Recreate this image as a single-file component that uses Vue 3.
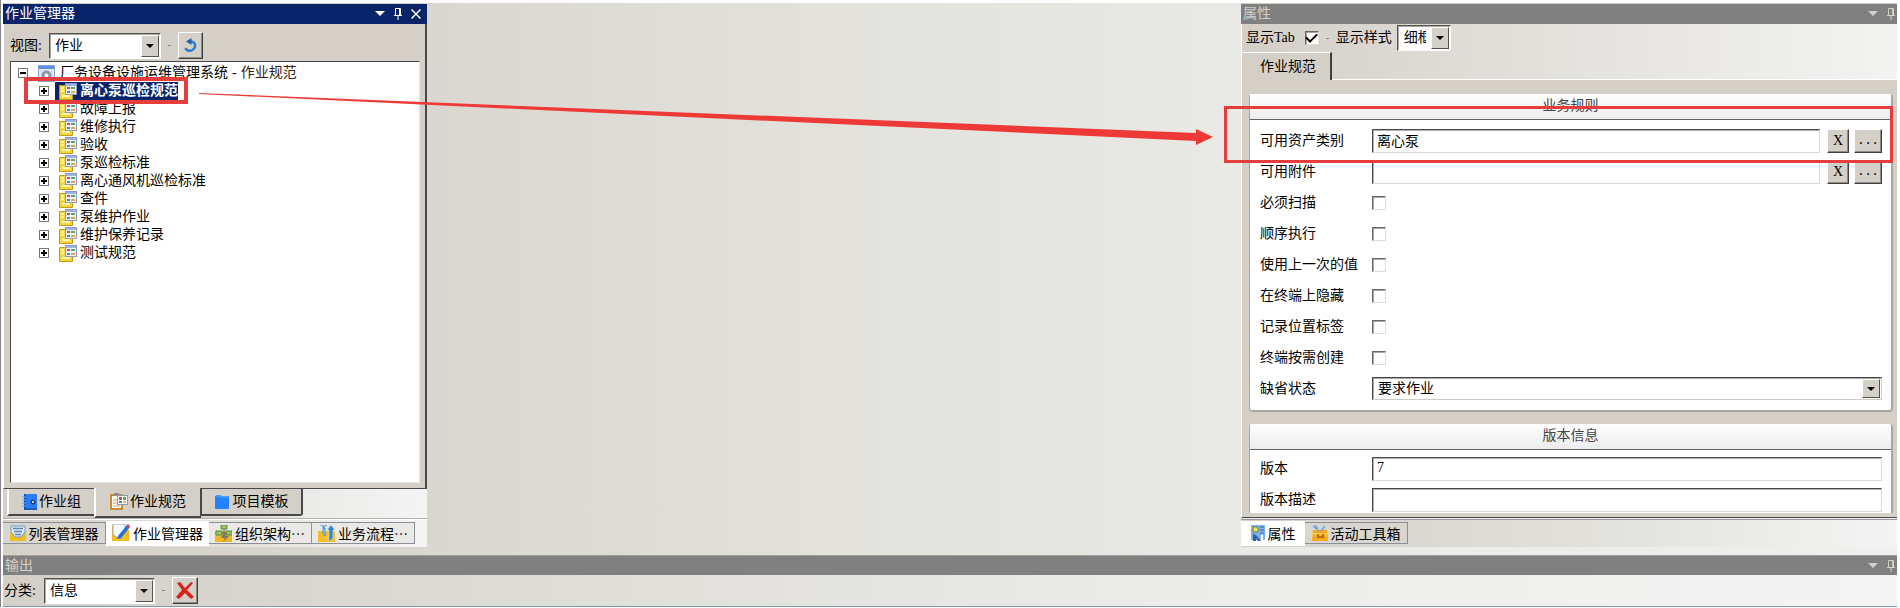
<script setup>
import { ref } from 'vue'

const view = ref('作业')
const category = ref('信息')
const style = ref('细框')
const state = ref('要求作业')
const showTab = ref(true)
const assetClass = ref('离心泵')
const attachment = ref('')
const version = ref('7')
const description = ref('')

const items = ref([
  '离心泵巡检规范', '故障上报', '维修执行', '验收', '泵巡检标准',
  '离心通风机巡检标准', '查件', '泵维护作业', '维护保养记录', '测试规范',
])
const flags = ref([
  { id: 'scan', label: '必须扫描', on: false },
  { id: 'order', label: '顺序执行', on: false },
  { id: 'last', label: '使用上一次的值', on: false },
  { id: 'hide', label: '在终端上隐藏', on: false },
  { id: 'place', label: '记录位置标签', on: false },
  { id: 'demand', label: '终端按需创建', on: false },
])
</script>

<template>
  <div class="page">
    <div class="workspace">
      <section class="panel left">
        <header class="title active">
          <h2>作业管理器</h2>
          <button class="tool" aria-label="菜单"><svg width="10" height="6"><path d="M0 0h10L5 5z" fill="currentColor" /></svg></button>
          <button class="tool" aria-label="固定"><svg width="8" height="12" fill="none" stroke="currentColor"><path d="M1.500 7V.5h5V7M5.500 1v6M0 7.500h8M4 8v4" /></svg></button>
          <button class="tool" aria-label="关闭"><svg width="10" height="10" stroke="currentColor" stroke-width="1.500"><path d="M.5.5l9 9M9.500.5l-9 9" /></svg></button>
        </header>
        <div class="body left-body">
          <div class="toolbar">
            <label for="view">视图:</label>
            <span class="combo view"><select id="view" v-model="view"><option>作业</option></select><i></i></span>
            <span class="dash"></span>
            <button class="raised refresh" aria-label="刷新">
              <svg width="15" height="15"><path d="M7 3.500c4 0 5.500 2 5 5s-4 5-7 4l-3-2" fill="none" stroke="#2b7fd0" stroke-width="2.500" /><path d="M3 3.500L8.500 0v7z" fill="#1f63a8" /></svg>
            </button>
          </div>
          <div class="tree">
            <div class="node root">
              <button class="expander" aria-label="折叠"></button>
              <svg width="17" height="17"><rect x=".5" y=".5" width="16" height="16" fill="#dfe5ee" stroke="#8aa6d6" /><path d="M1 1h15v3H1z" fill="#5d90e4" /><circle cx="8.500" cy="10.500" r="3.500" fill="#fff" stroke="#8b97a6" stroke-width="3" /></svg>
              <span class="name">厂务设备设施运维管理系统<span class="sep">-</span><span class="kind">作业规范</span></span>
            </div>
            <div v-for="(item, i) in items" :key="item" class="node" :class="{ selected: i === 0 }">
              <button class="expander plus" aria-label="展开"></button>
              <span class="entry">
                <svg width="18" height="17"><path d="M.5 2.500h6v3h7v11H.5z" fill="#f6d63c" stroke="#c49a1c" /><path d="M2 5h3M2 8h3M3 13h8" stroke="#fff6b0" stroke-width="2" /><rect x="6.500" y=".5" width="11" height="11" fill="#eef4ff" stroke="#8a9cc4" /><path d="M7 1h10v2H7z" fill="#9fb4e4" /><path d="M8 4h3v2H8z" fill="#c8514b" /><path d="M12 4h4v2h-4z" fill="#56a957" /><path d="M8 8h3v2H8z" fill="#4a86d8" /><path d="M12 8h4v2h-4z" fill="#e0a646" /></svg>
                <span class="name">{{ item }}</span>
              </span>
              <span v-if="i === 0" class="mark"></span>
            </div>
          </div>
        </div>
        <nav class="sheets">
          <button class="sheet">
            <svg width="15" height="16"><path d="M2 0h13v16H2z" fill="#2b7cf0" /><path d="M2 0h2v16H2z" fill="#1456b8" /><path d="M0 3h4M0 6h4M0 9h4M0 12h4" stroke="#6aa5f5" /><path d="M4 14h11v2H4z" fill="#1a5dc4" /><circle cx="11" cy="8" r="2.500" fill="#123f8c" /><circle cx="11" cy="8" r="1" fill="#fff" /></svg>作业组
          </button>
          <button class="sheet current">
            <svg width="18" height="17"><rect x="1" y="2" width="11" height="14" fill="#fffaf0" stroke="#c98a3c" stroke-width="2" /><path d="M4 0h5v3H4z" fill="#8c8c8c" /><path d="M3 7h7M3 10h7M3 13h7" stroke="#c7a47a" /><rect x="7.500" y="2.500" width="10" height="9" fill="#fff" stroke="#8a9cb4" /><path d="M9 4h3v3H9z" fill="#c8514b" /><path d="M13 4h3v3h-3z" fill="#56a957" /><path d="M9 8h3v2H9z" fill="#4a86d8" /><path d="M13 8h3v2h-3z" fill="#e9bd3a" /></svg>作业规范
          </button>
          <button class="sheet last">
            <svg width="16" height="15"><rect y="2" width="14" height="13" rx="1" fill="#2384fa" /><path d="M1 3V1h5l1 1h6v2" fill="#4d9dff" /></svg>项目模板
          </button>
        </nav>
        <nav class="docks">
          <button class="dock"><svg width="16" height="16"><path d="M0 7l8 4 8-4v9H0z" fill="#f2bd1e" /><path d="M1 1h14v6l-4 5H5L1 7z" fill="#dce8f4" stroke="#7d9cbe" /><path d="M3 3.500h10M4 6.500h8M5 9.500h6" stroke="#5c86b4" stroke-width="1.500" /></svg>列表管理器</button>
          <button class="dock current"><svg width="18" height="17"><path d="M0 1h11l6 5v11H0z" fill="#f3bf23" /><path d="M1 0h12v9l-5 6-7-4z" fill="#f6f9fd" stroke="#93a9c4" /><path d="M6 12L15 1l3 2-9 11-4 1z" fill="#2a6fd0" /><path d="M14 2l2-2 2 2-1 2z" fill="#d44" /></svg>作业管理器</button>
          <button class="dock"><svg width="17" height="17"><path d="M0 6h17v11H0z" fill="#efb71d" /><path d="M6 0h6v4H6zM1 6h6v4H1zM11 6h6v4h-6z" fill="#9ac66a" stroke="#5a8a3c" /><path d="M9 4v3M7 8h4" stroke="#555" /><path d="M9 8l-3 5h4l-2 4 6-6h-4l2-3z" fill="#777" /></svg>组织架构…</button>
          <button class="dock"><svg width="17" height="17"><path d="M0 6h17v11H0z" fill="#f4bf25" /><path d="M2 0h3v9l2 2V3H5l4-3" fill="#9cd0f4" stroke="#4b92cc" /><path d="M8 12l3 2V5H9l4-5 4 5h-2v8l-3 3z" fill="#2f87d2" stroke="#d9edfa" stroke-width=".5" /></svg>业务流程…</button>
        </nav>
      </section>

      <section class="panel right">
        <header class="title">
          <h2>属性</h2>
          <button class="tool" aria-label="菜单"><svg width="10" height="6"><path d="M0 0h10L5 5z" fill="currentColor" /></svg></button>
          <button class="tool" aria-label="固定"><svg width="8" height="12" fill="none" stroke="currentColor"><path d="M1.500 7V.5h5V7M5.500 1v6M0 7.500h8M4 8v4" /></svg></button>
        </header>
        <div class="options">
          <label for="show-tab">显示Tab</label>
          <input id="show-tab" v-model="showTab" type="checkbox" class="check" />
          <span class="dash"></span>
          <label for="style">显示样式</label>
          <span class="combo style"><select id="style" v-model="style"><option>细框</option></select><i></i></span>
        </div>
        <div class="page-tabs"><button>作业规范</button></div>
        <div class="body sheet-body">
          <fieldset class="group">
            <h3>业务规则</h3>
            <div class="rows">
              <div class="row">
                <label for="asset">可用资产类别</label>
                <input id="asset" v-model="assetClass" class="text" />
                <button class="raised clear">X</button><button class="raised more">...</button>
              </div>
              <div class="row">
                <label for="attach">可用附件</label>
                <input id="attach" v-model="attachment" class="text" />
                <button class="raised clear">X</button><button class="raised more">...</button>
              </div>
              <div v-for="flag in flags" :key="flag.id" class="row">
                <label :for="flag.id">{{ flag.label }}</label>
                <input :id="flag.id" v-model="flag.on" type="checkbox" class="check" />
              </div>
              <div class="row">
                <label for="state">缺省状态</label>
                <span class="combo state"><select id="state" v-model="state"><option>要求作业</option></select><i></i></span>
              </div>
            </div>
          </fieldset>
          <fieldset class="group cut">
            <h3>版本信息</h3>
            <div class="rows">
              <div class="row"><label for="version">版本</label><input id="version" v-model="version" class="text" /></div>
              <div class="row"><label for="desc">版本描述</label><input id="desc" v-model="description" class="text" /></div>
            </div>
          </fieldset>
        </div>
        <nav class="docks">
          <button class="dock current"><svg width="14" height="16"><path d="M0 0h14v15H0z" fill="#7fb0ea" /><path d="M2 2h5v5H2z" fill="#f2e04c" stroke="#6a8a3c" /><path d="M9 2h4M9 5h4M9 8h4" stroke="#3c6cb8" /><path d="M2 16V9l3 1 5 6H7l-2-3v3z" fill="#2f5fa8" /><path d="M10 10h2v5h-2z" fill="#fff" /></svg>属性</button>
          <button class="dock"><svg width="16" height="16"><path d="M1 5h14l1 11H0z" fill="#f5a81c" /><path d="M0 8h16v2H0z" fill="#ffc84a" /><path d="M5 9h2v2h3V9h2v4H5z" fill="#b8700c" /><path d="M1 1l6 5M13 1L9 6M3 0l3 4" stroke="#6fa4d4" stroke-width="1.500" /></svg>活动工具箱</button>
        </nav>
        <span class="mark"></span>
      </section>
    </div>

    <section class="output">
      <header class="title">
        <h2>输出</h2>
        <button class="tool" aria-label="菜单"><svg width="10" height="6"><path d="M0 0h10L5 5z" fill="currentColor" /></svg></button>
        <button class="tool" aria-label="固定"><svg width="8" height="12" fill="none" stroke="currentColor"><path d="M1.500 7V.5h5V7M5.500 1v6M0 7.500h8M4 8v4" /></svg></button>
      </header>
      <div class="output-bar">
        <label for="category">分类:</label>
        <span class="combo category"><select id="category" v-model="category"><option>信息</option></select><i></i></span>
        <span class="dash"></span>
        <button class="raised erase" aria-label="清除">
          <svg width="18" height="17"><path d="M1 1l3-1 5 6 6-6 2 1-6 7 7 7-3 2-6-6-6 6-3-2 6-7z" fill="#d8201c" /></svg>
        </button>
      </div>
    </section>

    <svg class="arrow" viewBox="0 0 1015 56" preserveAspectRatio="none" aria-hidden="true">
      <path d="M0 0L996 40V36L1013 44 996 52V48L0 1z" fill="#ee3a36" />
    </svg>
  </div>
</template>

<style>
body { background: #fff; }
</style>

<style scoped>
* { box-sizing: border-box; }
.page {
  position: relative;
  padding: 3px 3px 0 2px;
  border-left: 1px solid #84848a;
  font: 14px/18px "Liberation Serif", "Noto Sans CJK SC", serif;
  color: #000;
}
button, input, select { font: inherit; color: inherit; margin: 0; padding: 0; border: 0; border-radius: 0; outline: 0; }
h2, h3 { margin: 0; font: inherit; }
label { white-space: nowrap; }
.workspace {
  display: flex;
  justify-content: space-between;
  padding-bottom: 8px;
  background: linear-gradient(90deg, #d6d2ca 0%, #dad7d0 23%, #e3e2dd 45%, #e9e9e5 65%, #efefed 100%);
}
.panel { position: relative; display: flex; flex-direction: column; border-top: 1px solid #d4d0c8; }
.left { width: 424px; }
.right { width: 656px; }
.title { display: flex; align-items: center; gap: 8px; height: 20px; padding: 0 5px 0 2px; background: #808080; color: #d4d0c8; }
.title.active { background: #0a246a; color: #fff; }
.title h2 { flex: 1; }
.tool { display: flex; align-items: center; justify-content: center; width: 10px; height: 16px; background: none; }
.title.active { padding-right: 6px; }
.right .title, .output .title { padding-right: 1px; }

.body { background: #d4d0c8; }
.left-body { height: 465px; padding: 8px 5px 5px 6px; border-right: 2px solid #48484c; border-bottom: 1px solid #48484c; border-left: 1px solid #fff; }
.toolbar { display: flex; align-items: center; height: 27px; margin-bottom: 2px; }
.toolbar label { width: 39px; }
.dash { width: 3px; height: 1px; margin: 0 7px; background: #8b8983; }
.combo { display: flex; height: 26px; border: 1px solid; border-color: #55534f #fff #fff #55534f; background: #fff; box-shadow: inset 1px 1px #aaa8a2; }
.combo select { flex: 1; min-width: 0; padding-left: 5px; appearance: none; background: transparent; }
.combo i { width: 18px; margin: 1px; background: #d4d0c8; border: 1px solid; border-color: #fff #55534f #55534f #fff; display: grid; place-items: center; pointer-events: none; }
.combo i::after { content: ""; border: 4px solid transparent; border-top-color: #000; border-bottom: 0; }
.view { width: 112px; }
.raised { display: grid; place-items: center; background: #d4d0c8; border: 1px solid; border-color: #fff #404040 #404040 #fff; box-shadow: inset -1px -1px #8c8a85; }
.refresh { width: 25px; height: 27px; }

.tree { height: 422px; padding: 2px 0; border: 1px solid; border-color: #48484c #e8e6de #e8e6de #48484c; background: #fff; }
.node { position: relative; display: flex; align-items: center; height: 18px; padding-left: 28px; white-space: nowrap; }
.node.root { padding-left: 7px; }
.root svg { margin-left: 10px; }
.root .name { margin-left: 5px; }
.sep { margin: 0 4px; }
.kind { color: #3a1c10; }
.expander { position: relative; width: 10px; height: 10px; background: #fff; border: 1px solid #777; }
.expander::before { content: ""; position: absolute; left: 1px; top: 3px; width: 6px; height: 2px; background: #000; }
.plus::after { content: ""; position: absolute; left: 3px; top: 1px; width: 2px; height: 6px; background: #000; }
.entry { display: flex; align-items: center; gap: 3px; height: 18px; margin-left: 6px; padding-left: 4px; }
.selected .entry { background: #0a246a; color: #fff; }
.selected .name { font-weight: 700; }
.mark { position: absolute; z-index: 2; border: 4px solid #e53c3c; pointer-events: none; }
.node .mark { left: 13px; top: -5px; width: 164px; height: 27px; }

.sheets { display: flex; align-items: flex-start; height: 30px; padding-left: 4px; background: linear-gradient(90deg, #d4d0c8 50%, #ebebe9 72%, #f4f4f4); border-bottom: 1px solid #b4b2ac; }
.sheet { display: flex; align-items: center; justify-content: center; gap: 2px; width: 87px; height: 27px; background: #d4d0c8; border-left: 2px solid #fff; border-bottom: 2px solid #48484c; white-space: nowrap; }
.sheet.current { width: 107px; height: 30px; margin-top: -1px; padding-bottom: 1px; border-right: 1px solid #48484c; }
.sheet.last { width: 102px; border-left: 1px solid #48484c; border-right: 2px solid #48484c; border-radius: 0 0 3px; }
.docks { display: flex; align-items: flex-start; height: 28px; padding-top: 2px; border-top: 1px solid #fff; background: linear-gradient(90deg, #d4d0c8, #e2e1dc 55%, #f4f4f4); }
.dock { display: flex; align-items: center; justify-content: center; gap: 3px; width: 103px; height: 22px; background: #d9d6cf; border: 1px solid #8a8f9a; border-left: 0; font-family: "Noto Sans CJK SC", sans-serif; white-space: nowrap; }
.left .dock:nth-child(n + 3) { background: #eae9e6; }
.dock.current { height: 25px; margin-top: -1px; padding-bottom: 2px; background: #fff; border: 0; }

.options { display: flex; align-items: center; height: 28px; padding-left: 4px; background: linear-gradient(90deg, #d4d0c8, #e4e2dd 50%, #f3f3f2); border-left: 1px solid #fff; }
.options .check { margin-left: 10px; }
.options .combo { margin-left: 5px; }
.style { width: 54px; }
.style select { margin-left: 6px; padding-left: 0; overflow: hidden; text-overflow: clip; }
.style i { margin-left: 5px; }
.check { appearance: none; display: grid; place-items: center; width: 14px; height: 14px; background: #fff; border: 1px solid; border-color: #6a6864 #dedcd6 #dedcd6 #6a6864; box-shadow: inset 1px 1px #a8a6a2; }
.check:checked::after { content: ""; width: 9px; height: 5px; border: solid #000; border-width: 0 0 2px 2px; transform: rotate(-45deg); margin-bottom: 3px; }
.page-tabs { display: flex; height: 28px; background: linear-gradient(90deg, #d4d0c8, #e4e2dd 50%, #f3f3f2); border-bottom: 1px solid #fff; }
.page-tabs button { width: 91px; height: 28px; padding-left: 4px; background: #d4d0c8; border-top: 1px solid #fff; border-left: 1px solid #fff; border-right: 2px solid #404040; }
.sheet-body { height: 438px; padding: 14px 4px 5px 7px; border-left: 1px solid #fff; border-bottom: 1px solid #48484c; overflow: hidden; }
.right .docks { margin-top: 1px; border-top-color: #9a9a9e; }
.right .dock.current { width: 64px; }
.group { margin: 0 0 12px; padding: 0; border: 1px solid; border-width: 0 2px 2px 1px; border-color: #a8a6a2; border-radius: 3px; background: #fff; min-width: 0; }
.group h3 { height: 26px; padding-top: 3px; border-bottom: 1px solid #65635f; background: linear-gradient(#fff, #ececee); text-align: center; color: #444; }
.rows { padding: 5px 9px 6px 10px; }
.cut .rows { padding-top: 3px; }
.row { display: flex; align-items: center; height: 31px; }
.row label { width: 112px; }
.text { flex: 1; min-width: 0; height: 24px; padding: 0 0 2px 4px; border: 1px solid; border-color: #48484c #d8d8d8 #d8d8d8 #48484c; box-shadow: inset 1px 1px #b4b2ae; background: #fff; }
.clear { width: 22px; height: 24px; margin-left: 7px; }
.more { width: 28px; height: 24px; margin-left: 5px; font-family: "Liberation Mono", monospace; font-size: 12px; }
.state { flex: 1; height: 23px; border-color: #48484c #ccc #ccc #48484c; }
.right > .mark { left: -17px; right: 4px; top: 102px; height: 57px; border-width: 3px; }
.cut { height: 89px; margin: 0; border-bottom: 0; border-radius: 3px 3px 0 0; overflow: hidden; }

.output .title { border-top: 1px solid #a0a09e; }
.output-bar { display: flex; align-items: center; height: 32px; padding-left: 1px; background: linear-gradient(90deg, #d4d0c8, #dddbd5 25%, #ebebe8 60%, #f4f4f4); border-bottom: 1px solid #7d95b8; }
.output-bar label { width: 40px; }
.category { width: 111px; }
.erase { width: 26px; height: 27px; }
.arrow { position: absolute; left: 198px; top: 93px; width: calc(100% - 883px); height: 56px; pointer-events: none; }
</style>
